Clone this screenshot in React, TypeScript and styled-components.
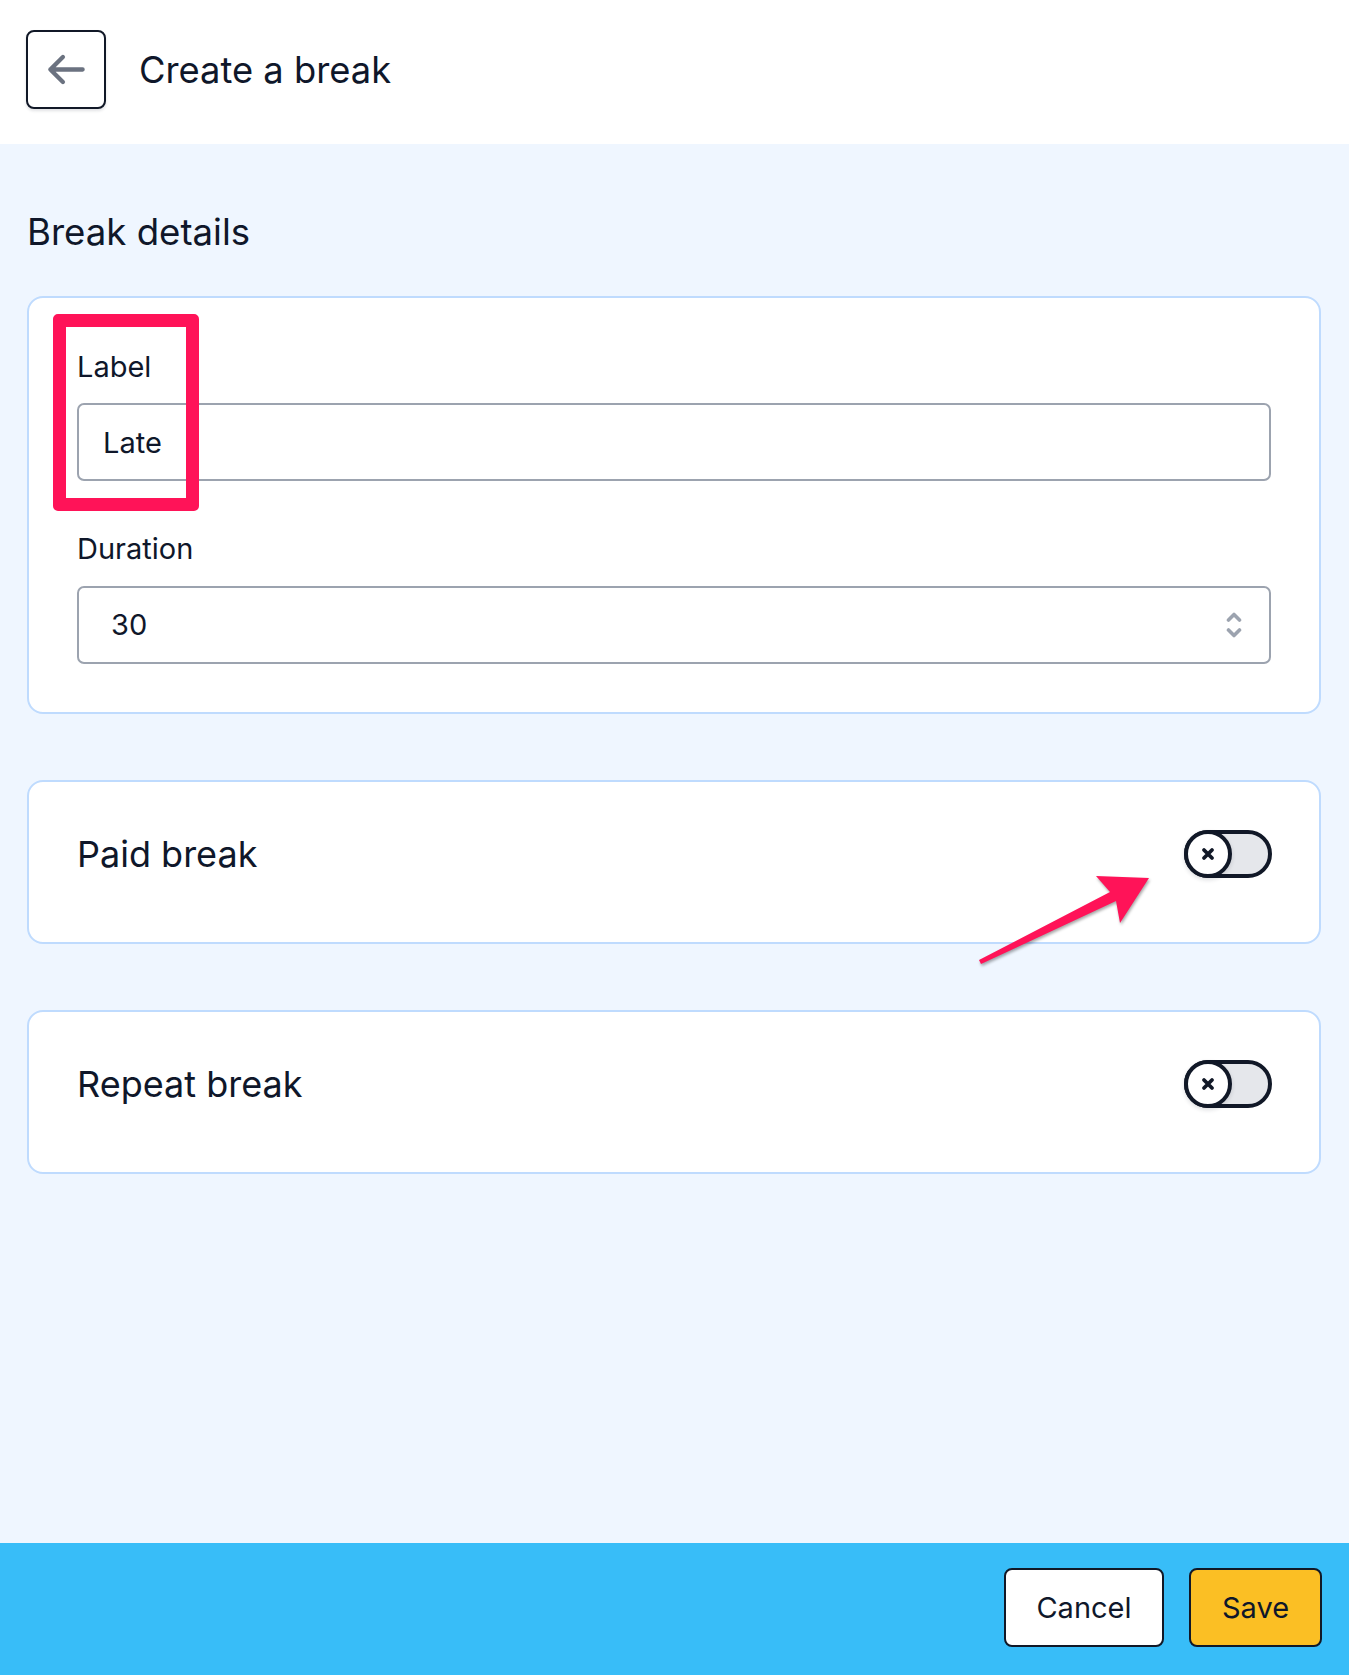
import React from "react";
import styled, { createGlobalStyle } from "styled-components";

const GlobalStyle = createGlobalStyle`
  *, *::before, *::after { box-sizing: border-box; }
  html, body { margin: 0; padding: 0; }
  body {
    font-family: Inter, "Noto Sans", "Liberation Sans", sans-serif;
    color: #111827;
    background: #eff6ff;
  }
`;

const Page = styled.div`
  min-height: 100vh;
  display: flex;
  flex-direction: column;
`;

const Header = styled.header`
  display: flex;
  align-items: center;
  gap: 33px;
  height: 144px;
  padding: 30px 26px 35px;
  background: #ffffff;
`;

const BackButton = styled.button`
  width: 80px;
  height: 79px;
  display: flex;
  align-items: center;
  justify-content: center;
  background: #ffffff;
  border: 2.5px solid #111827;
  border-radius: 8px;
  box-shadow: 0 2px 3px rgba(17, 24, 39, 0.12);
  padding: 0;
  cursor: pointer;
`;

const Title = styled.h1`
  margin: 0;
  font-size: 36.3px;
  line-height: 46px;
  font-weight: 400;
  color: #0f172a;
`;

const Main = styled.main`
  flex: 1;
  background: #eff6ff;
  padding: 65px 28px 0 27px;
`;

const SectionHeading = styled.h2`
  margin: 0 0 41px;
  font-size: 36.6px;
  line-height: 46px;
  font-weight: 400;
  color: #0f172a;
`;

const Card = styled.section<{ $gap?: number }>`
  position: relative;
  background: #ffffff;
  border: 2px solid #bfdbfe;
  border-radius: 16px;
  margin-top: ${(p) => p.$gap ?? 0}px;
`;

const FormCard = styled(Card)`
  display: flex;
  flex-direction: column;
  gap: 47px;
  padding: 47.5px 48px 48px;
`;

const Field = styled.div`
  display: flex;
  flex-direction: column;
  gap: 15.5px;
`;

const FieldLabel = styled.label`
  font-size: 29px;
  line-height: 42px;
  color: #0f172a;
`;

const TextInput = styled.input`
  height: 78px;
  width: 100%;
  border: 2px solid #9ca3af;
  border-radius: 7px;
  padding: 0 24px;
  font-family: inherit;
  font-size: 29px;
  color: #0f172a;
  background: #ffffff;
  outline: none;
`;

const SelectBox = styled.div`
  height: 78px;
  display: flex;
  align-items: center;
  justify-content: space-between;
  border: 2px solid #9ca3af;
  border-radius: 7px;
  padding: 0 27px 0 32px;
  font-size: 29px;
  color: #0f172a;
  background: #ffffff;
`;

const Highlight = styled.div`
  position: absolute;
  left: 24px;
  top: 16px;
  width: 146px;
  height: 197px;
  border: 13px solid #ff1358;
  border-radius: 5px;
  pointer-events: none;
`;

const ToggleCard = styled(Card)`
  display: flex;
  align-items: center;
  justify-content: space-between;
  padding: 48px 47px 64px 48px;
`;

const ToggleTitle = styled.h3`
  margin: 0;
  font-size: 36px;
  line-height: 44px;
  font-weight: 400;
  color: #0f172a;
`;

const Track = styled.button`
  position: relative;
  width: 88px;
  height: 48px;
  border: 4px solid #111827;
  border-radius: 999px;
  background: #e5e7eb;
  padding: 0;
  cursor: pointer;
`;

const Knob = styled.span`
  position: absolute;
  left: -4px;
  top: -4px;
  width: 48px;
  height: 48px;
  border: 4px solid #111827;
  border-radius: 50%;
  background: #ffffff;
  display: flex;
  align-items: center;
  justify-content: center;
  box-shadow: 0 2px 4px rgba(17, 24, 39, 0.15);
`;

const Annotation = styled.svg`
  position: absolute;
  left: 940px;
  top: 90px;
  overflow: visible;
  pointer-events: none;
  filter: drop-shadow(1px 2px 1.5px rgba(0, 0, 0, 0.35));
`;

const Footer = styled.footer`
  display: flex;
  justify-content: flex-end;
  gap: 25px;
  padding: 25px 27px 28px;
  background: #38bdf8;
`;

const FooterButton = styled.button<{ $primary?: boolean }>`
  height: 79px;
  min-width: ${(p) => (p.$primary ? 133 : 160)}px;
  padding: 0 24px;
  border: 2.5px solid #111827;
  border-radius: 8px;
  background: ${(p) => (p.$primary ? "#fbbf24" : "#ffffff")};
  color: #0f172a;
  font-family: inherit;
  font-size: 29px;
  cursor: pointer;
`;

const ArrowLeftIcon = () => (
  <svg width="43" height="43" viewBox="0 0 24 24" fill="none" stroke="#6b7280" strokeWidth={2.4} strokeLinecap="round" strokeLinejoin="round">
    <path d="M10 19l-7-7m0 0l7-7m-7 7h18" />
  </svg>
);

const UpDownIcon = () => (
  <svg width="16" height="28" viewBox="0 0 16 28" fill="none" stroke="#9ca3af" strokeWidth={3.6} strokeLinecap="round" strokeLinejoin="round">
    <polyline points="2.5,9 8,3.5 13.5,9" />
    <polyline points="2.5,19 8,24.5 13.5,19" />
  </svg>
);

const XIcon = () => (
  <svg width="14" height="14" viewBox="0 0 14 14" fill="none" stroke="#111827" strokeWidth={3.8} strokeLinecap="round">
    <path d="M3 3l8 8M11 3l-8 8" />
  </svg>
);

const Toggle = () => (
  <Track type="button" role="switch" aria-checked={false}>
    <Knob>
      <XIcon />
    </Knob>
  </Track>
);

export default function App() {
  // arrow coordinates are relative to the Annotation svg origin (card left + 940, card top + 90)
  const ox = 27 + 2 + 940;
  const oy = 781 + 2 + 90;
  const pt = (x: number, y: number) => `${x - ox},${y - oy}`;
  const arrow = [
    pt(1149, 879),
    pt(1096, 877),
    pt(1110, 893),
    pt(979, 961),
    pt(981, 965),
    pt(1116, 902),
    pt(1120, 924),
  ].join(" ");

  return (
    <>
      <GlobalStyle />
      <Page>
        <Header>
          <BackButton type="button" aria-label="Back">
            <ArrowLeftIcon />
          </BackButton>
          <Title>Create a break</Title>
        </Header>
        <Main>
          <SectionHeading>Break details</SectionHeading>
          <FormCard>
            <Field>
              <FieldLabel htmlFor="label">Label</FieldLabel>
              <TextInput id="label" defaultValue="Late" />
            </Field>
            <Field>
              <FieldLabel>Duration</FieldLabel>
              <SelectBox role="combobox">
                <span>30</span>
                <UpDownIcon />
              </SelectBox>
            </Field>
            <Highlight />
          </FormCard>
          <ToggleCard $gap={66}>
            <ToggleTitle>Paid break</ToggleTitle>
            <Toggle />
            <Annotation width="200" height="100">
              <polygon points={arrow} fill="#ff1358" />
            </Annotation>
          </ToggleCard>
          <ToggleCard $gap={66}>
            <ToggleTitle>Repeat break</ToggleTitle>
            <Toggle />
          </ToggleCard>
        </Main>
        <Footer>
          <FooterButton type="button">Cancel</FooterButton>
          <FooterButton type="button" $primary>
            Save
          </FooterButton>
        </Footer>
      </Page>
    </>
  );
}
